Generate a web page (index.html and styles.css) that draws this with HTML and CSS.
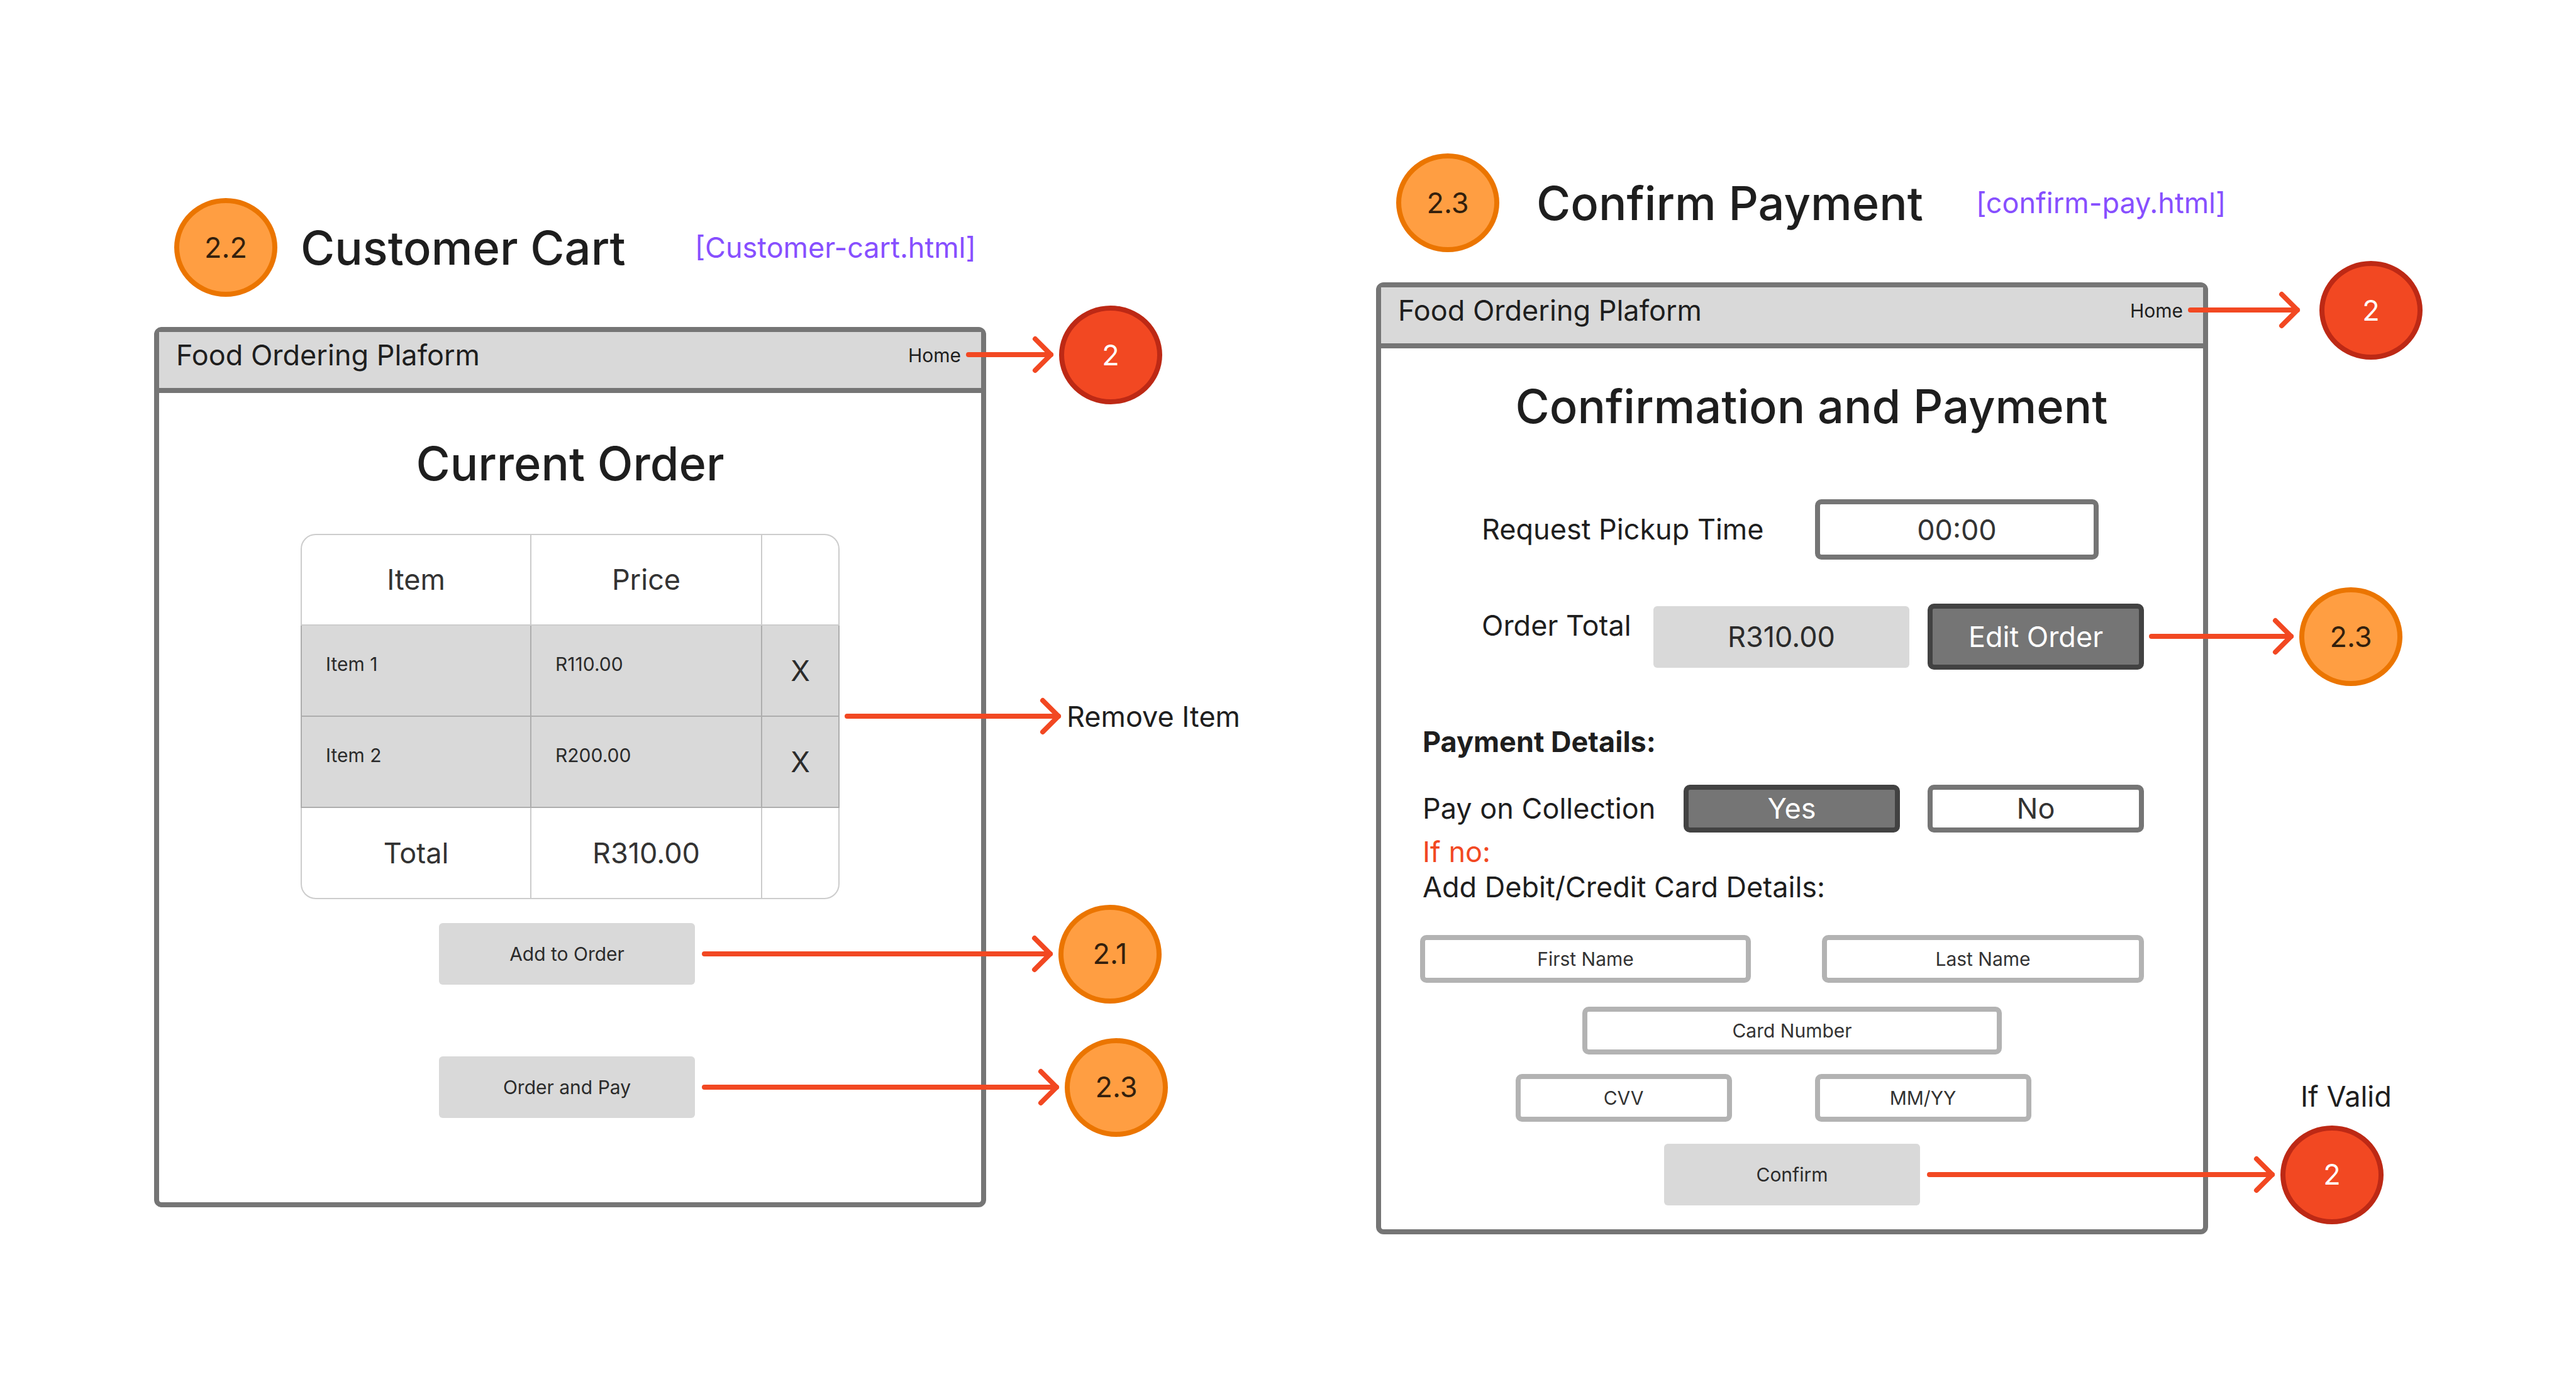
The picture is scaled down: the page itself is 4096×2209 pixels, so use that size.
FILE: index.html
```
<!DOCTYPE html>
<html lang="en">
<head>
<meta charset="utf-8">
<title>Food Ordering Plaform</title>
<link rel="stylesheet" href="styles.css">
</head>
<body>
<main class="board">

  <section class="screen screen-cart">
    <header class="caption">
      <span class="node">2.2</span>
      <h1 class="title">Customer Cart</h1>
      <a class="file" href="#cart">[Customer-cart.html]</a>
    </header>
    <div class="frame" id="cart">
      <nav class="topbar">
        <span>Food Ordering Plaform</span>
        <div class="anchor">
          <a class="home" href="#home">Home</a>
          <div class="connector">
            <svg class="arrow arrow-home" aria-hidden="true"><line x2="100%"/><svg class="head" x="100%"><path d="M-25 -25L0 0L-25 25"/></svg></svg>
            <span class="node node-red">2</span>
          </div>
        </div>
      </nav>
      <div class="cart">
        <h2 class="title">Current Order</h2>
        <div class="anchor order-wrap">
          <table class="order">
            <colgroup><col class="col-wide"><col class="col-wide"><col></colgroup>
            <thead>
              <tr><th>Item</th><th>Price</th><th></th></tr>
            </thead>
            <tbody>
              <tr><td>Item 1</td><td>R110.00</td><td><button class="remove" type="button">X</button></td></tr>
              <tr><td>Item 2</td><td>R200.00</td><td><button class="remove" type="button">X</button></td></tr>
            </tbody>
            <tfoot>
              <tr><th>Total</th><td>R310.00</td><td></td></tr>
            </tfoot>
          </table>
          <div class="connector">
            <svg class="arrow arrow-remove" aria-hidden="true"><line x2="100%"/><svg class="head" x="100%"><path d="M-25 -25L0 0L-25 25"/></svg></svg>
            <span class="note">Remove Item</span>
          </div>
        </div>
        <div class="actions">
          <div class="anchor">
            <button class="btn btn-small" type="button">Add to Order</button>
            <div class="connector connector-action">
              <svg class="arrow arrow-add" aria-hidden="true"><line x2="100%"/><svg class="head" x="100%"><path d="M-25 -25L0 0L-25 25"/></svg></svg>
              <span class="node">2.1</span>
            </div>
          </div>
          <div class="anchor">
            <button class="btn btn-small" type="button">Order and Pay</button>
            <div class="connector connector-action">
              <svg class="arrow arrow-pay" aria-hidden="true"><line x2="100%"/><svg class="head" x="100%"><path d="M-25 -25L0 0L-25 25"/></svg></svg>
              <span class="node">2.3</span>
            </div>
          </div>
        </div>
      </div>
    </div>
  </section>

  <section class="screen screen-pay">
    <header class="caption">
      <span class="node">2.3</span>
      <h1 class="title">Confirm Payment</h1>
      <a class="file" href="#pay">[confirm-pay.html]</a>
    </header>
    <div class="frame" id="pay">
      <nav class="topbar">
        <span>Food Ordering Plaform</span>
        <div class="anchor">
          <a class="home" href="#home">Home</a>
          <div class="connector connector-far">
            <svg class="arrow arrow-home-far" aria-hidden="true"><line x2="100%"/><svg class="head" x="100%"><path d="M-25 -25L0 0L-25 25"/></svg></svg>
            <span class="node node-red">2</span>
          </div>
        </div>
      </nav>
      <h2 class="title pay-title">Confirmation and Payment</h2>
      <form class="pay">
        <div class="row row-pickup">
          <label for="pickup">Request Pickup Time</label>
          <input class="box box-time" id="pickup" type="text" value="00:00">
        </div>
        <div class="row row-total">
          <label class="total-label" for="total">Order Total</label>
          <output class="btn total" id="total">R310.00</output>
          <div class="anchor">
            <button class="box box-dark box-edit" type="button">Edit Order</button>
            <div class="connector">
              <svg class="arrow arrow-edit" aria-hidden="true"><line x2="100%"/><svg class="head" x="100%"><path d="M-25 -25L0 0L-25 25"/></svg></svg>
              <span class="node">2.3</span>
            </div>
          </div>
        </div>
        <h3 class="details">Payment Details:</h3>
        <div class="row row-choice">
          <span class="choice-label" id="collection">Pay on Collection</span>
          <div class="choices" role="group" aria-labelledby="collection">
            <button class="box box-dark box-choice" type="button" aria-pressed="true">Yes</button>
            <button class="box box-choice" type="button" aria-pressed="false">No</button>
          </div>
        </div>
        <div class="notes">
          <p class="warn">If no:</p>
          <p>Add Debit/Credit Card Details:</p>
        </div>
        <div class="names">
          <input class="box box-field" type="text" placeholder="First Name" aria-label="First Name">
          <input class="box box-field" type="text" placeholder="Last Name" aria-label="Last Name">
        </div>
        <input class="box box-field box-card" type="text" placeholder="Card Number" aria-label="Card Number">
        <div class="codes">
          <input class="box box-field box-code" type="text" placeholder="CVV" aria-label="CVV">
          <input class="box box-field box-code" type="text" placeholder="MM/YY" aria-label="MM/YY">
        </div>
        <div class="anchor submit">
          <button class="btn btn-small" type="button">Confirm</button>
          <div class="connector connector-action">
            <svg class="arrow arrow-confirm" aria-hidden="true"><line x2="100%"/><svg class="head" x="100%"><path d="M-25 -25L0 0L-25 25"/></svg></svg>
            <div class="anchor">
              <span class="node-note">If Valid</span>
              <span class="node node-red">2</span>
            </div>
          </div>
        </div>
      </form>
    </div>
  </section>

</main>
</body>
</html>
```
FILE: styles.css
```
* {
  box-sizing: border-box;
}

body {
  margin: 0;
  background: #fff;
  color: #1e1e1e;
  font: 400 45px/56px Inter, "Liberation Sans", sans-serif;
}

h1, h2, h3, p {
  margin: 0;
}

a {
  color: inherit;
  text-decoration: none;
}

button, input {
  font: inherit;
  color: inherit;
}

.board {
  display: grid;
  grid-template-columns: minmax(0, 1fr) minmax(0, 1fr);
  column-gap: 620px;
  align-items: start;
  min-height: 100vh;
  padding: 0 585px 0 245px;
}

.screen-cart {
  padding-top: 315px;
}

.screen-pay {
  padding-top: 244px;
}

/* Caption above each screen */

.caption {
  display: flex;
  align-items: center;
  padding-left: 32px;
  margin-bottom: 48px;
}

.title {
  font-size: 74px;
  font-weight: 500;
  line-height: 96px;
  white-space: nowrap;
}

.caption .title {
  margin: 0 110px 0 37px;
}

.screen-pay .caption .title {
  margin: 0 84px 0 59px;
}

.file {
  color: #874fff;
  white-space: nowrap;
}

/* Flow nodes and arrows */

.node {
  display: flex;
  flex: none;
  align-items: center;
  justify-content: center;
  width: 164px;
  height: 157px;
  border: 8px solid #eb7500;
  border-radius: 50%;
  background: #ff9e42;
  color: #33200d;
}

.node-red {
  border-color: #bd2915;
  background: #f24822;
  color: #fff;
}

.anchor {
  position: relative;
}

.connector {
  position: absolute;
  z-index: 1;
  top: 0;
  bottom: 0;
  left: 100%;
  display: flex;
  align-items: center;
  gap: 9px;
  padding-left: 8px;
  white-space: nowrap;
}

.connector-action {
  padding-left: 11px;
}

.connector-far {
  gap: 31px;
}

.arrow {
  flex: none;
  height: 1px;
  margin: 0 4px;
  overflow: visible;
  fill: none;
  stroke: #f24822;
  stroke-width: 8px;
  stroke-linecap: round;
  stroke-linejoin: round;
}

.head {
  overflow: visible;
}

.arrow-home {
  width: 131px;
}

.arrow-home-far {
  width: 170px;
}

.arrow-remove {
  width: 336px;
}

.arrow-add {
  width: 550px;
}

.arrow-pay {
  width: 560px;
}

.arrow-edit {
  width: 222px;
}

.arrow-confirm {
  width: 545px;
}

.node-note {
  position: absolute;
  bottom: 100%;
  left: 32px;
  margin-bottom: 18px;
}

/* Screen frame */

.frame {
  border: 8px solid #757575;
  border-radius: 12px;
}

.topbar {
  display: flex;
  align-items: center;
  justify-content: space-between;
  height: 97px;
  padding: 0 32px 16px 27px;
  border-bottom: 8px solid #757575;
  background: #d9d9d9;
}

.home {
  display: block;
  font-size: 30px;
}

.btn {
  display: flex;
  align-items: center;
  justify-content: center;
  width: 407px;
  height: 98px;
  padding: 0;
  border: 0;
  border-radius: 6px;
  background: #d9d9d9;
  color: #2b2b2b;
}

.btn-small {
  font-size: 30px;
}

/* Cart */

.cart {
  display: flex;
  flex-direction: column;
  align-items: center;
  padding: 64px 0 134px;
}

.order-wrap {
  width: 66%;
  max-width: 857px;
  margin: 64px 0 38px;
}

.order {
  width: 100%;
  table-layout: fixed;
  border-collapse: separate;
  border-spacing: 0;
  color: #333;
}

.col-wide {
  width: 367px;
}

.order th, .order td {
  height: 145px;
  padding: 0;
  border: solid rgba(0, 0, 0, 0.2);
  border-width: 0 2px 2px 0;
  font-weight: 400;
  text-align: center;
}

.order tr > :first-child {
  border-left-width: 2px;
}

.order thead th {
  height: 146px;
  border-top-width: 2px;
}

.order thead th:first-child {
  border-top-left-radius: 24px;
}

.order thead th:last-child {
  border-top-right-radius: 24px;
}

.order tfoot tr > :first-child {
  border-bottom-left-radius: 24px;
}

.order tfoot tr > :last-child {
  border-bottom-right-radius: 24px;
}

.order tbody td {
  padding: 0 0 22px 38px;
  background: #d9d9d9;
  color: #2b2b2b;
  font-size: 30px;
  text-align: left;
}

.order tbody td:last-child {
  padding: 0;
  text-align: center;
}

.remove {
  display: block;
  width: 100%;
  padding: 0;
  border: 0;
  background: none;
  font-size: 45px;
}

.actions {
  display: flex;
  flex-direction: column;
  gap: 114px;
  width: 66%;
  max-width: 857px;
  padding-left: 220px;
}

.actions .anchor {
  width: 407px;
}

/* Payment */

.pay-title {
  margin: 44px 0 100px;
  padding-left: 62px;
  text-align: center;
}

.pay {
  display: flex;
  flex-direction: column;
  padding: 0 62px 38px;
}

.box {
  min-width: 0;
  height: 76px;
  padding: 0;
  border: 8px solid #757575;
  border-radius: 10px;
  background: #fff;
  color: #333;
  text-align: center;
}

.box-dark {
  display: block;
  border-color: #424242;
  background: #757575;
  color: #fff;
}

.box-time {
  width: 451px;
  height: 96px;
}

.box-edit {
  width: 344px;
  height: 105px;
}

.box-choice {
  width: 344px;
}

.box-field {
  border-color: #b3b3b3;
  font-size: 30px;
}

.box-field::placeholder {
  color: inherit;
  opacity: 1;
}

.row {
  display: flex;
  align-items: center;
  justify-content: space-between;
  padding-right: 32px;
}

.row-pickup {
  padding: 0 104px 0 98px;
  margin-bottom: 70px;
}

.row-total {
  gap: 29px;
  padding-left: 98px;
}

.total-label {
  margin-right: auto;
  padding-bottom: 36px;
}

.details {
  margin: 87px 0 40px;
  padding-left: 4px;
  font-size: 45px;
  font-weight: 700;
}

.choice-label {
  padding-left: 4px;
}

.choices {
  display: flex;
  gap: 44px;
}

.notes {
  margin: 3px 0 48px;
  padding-left: 4px;
}

.warn {
  color: #f24822;
}

.names {
  display: grid;
  grid-template-columns: 526fr 512fr;
  gap: 113px;
  padding-right: 32px;
}

.box-card {
  align-self: center;
  width: 667px;
  margin: 38px 0 31px;
}

.codes {
  display: flex;
  justify-content: center;
  gap: 132px;
  padding-right: 60px;
  margin-bottom: 35px;
}

.box-code {
  width: 344px;
}

.submit {
  align-self: center;
}
```
